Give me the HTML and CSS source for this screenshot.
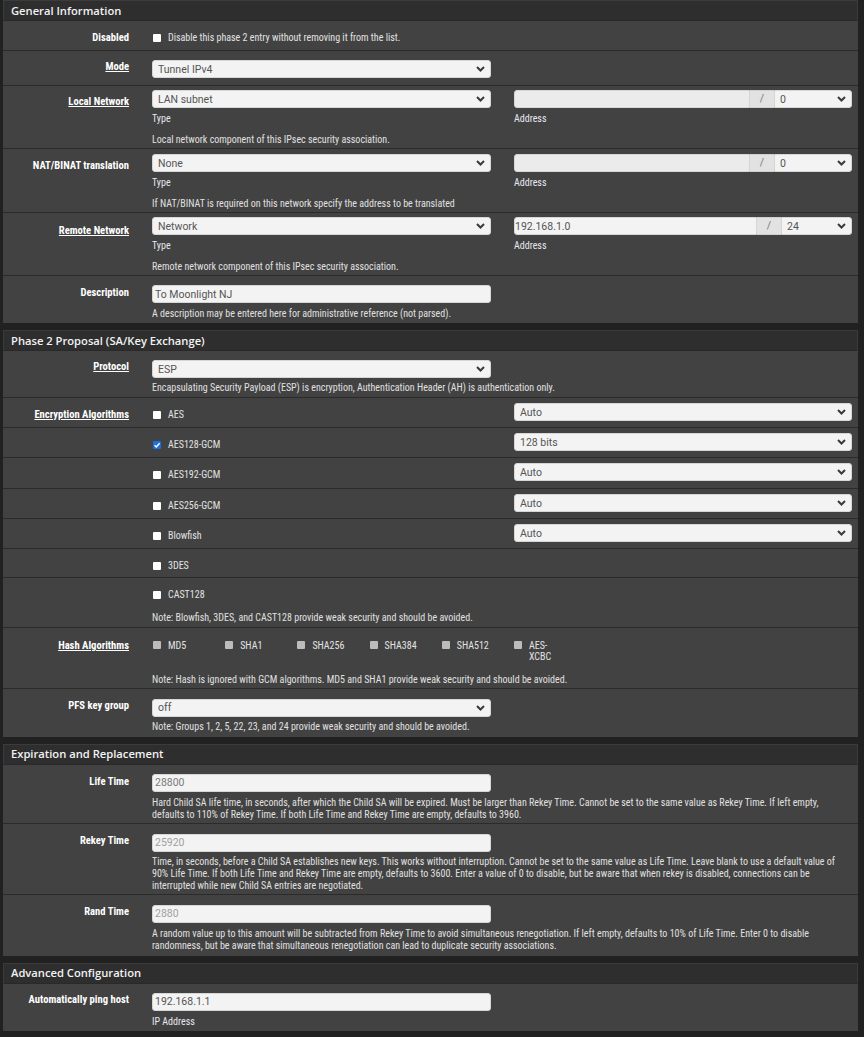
FILE: index.html
```html
<!DOCTYPE html>
<html lang="en">
<head>
<meta charset="utf-8">
<title>IPsec Phase 2</title>
<link rel="stylesheet" href="styles.css">
</head>
<body>
<div class="page">

<section class="panel">
  <h2 class="ph">General Information</h2>

  <div class="row p5 q6">
    <div class="lbl o1">Disabled</div>
    <div class="c2"><div class="cbline"><span class="cb"></span><span>Disable this phase 2 entry without removing it from the list.</span></div></div>
  </div>

  <div class="row p9 q7">
    <div class="lbl"><u>Mode</u></div>
    <div class="c2">
      <span class="sw"><select><option>Tunnel IPv4</option></select><svg viewBox="0 0 9 6"><path d="M1 1l3.5 3.5L8 1"/></svg></span>
    </div>
  </div>

  <div class="row p4 q2">
    <div class="lbl"><u>Local Network</u></div>
    <div class="c2">
      <span class="sw"><select><option>LAN subnet</option></select><svg viewBox="0 0 9 6"><path d="M1 1l3.5 3.5L8 1"/></svg></span>
      <div class="sub">Type</div>
    </div>
    <div class="c3">
      <div class="ig"><input class="inp dis" type="text" value=""><span class="addon">/</span><span class="sw w78"><select><option>0</option></select><svg viewBox="0 0 9 6"><path d="M1 1l3.5 3.5L8 1"/></svg></span></div>
      <div class="sub">Address</div>
    </div>
    <div class="help span m9">Local network component of this IPsec security association.</div>
  </div>

  <div class="row p5 q2">
    <div class="lbl o1">NAT/BINAT translation</div>
    <div class="c2">
      <span class="sw"><select><option>None</option></select><svg viewBox="0 0 9 6"><path d="M1 1l3.5 3.5L8 1"/></svg></span>
      <div class="sub">Type</div>
    </div>
    <div class="c3">
      <div class="ig"><input class="inp dis" type="text" value=""><span class="addon">/</span><span class="sw w78"><select><option>0</option></select><svg viewBox="0 0 9 6"><path d="M1 1l3.5 3.5L8 1"/></svg></span></div>
      <div class="sub">Address</div>
    </div>
    <div class="help span m9">If NAT/BINAT is required on this network specify the address to be translated</div>
  </div>

  <div class="row p4 q2">
    <div class="lbl o2"><u>Remote Network</u></div>
    <div class="c2">
      <span class="sw"><select><option>Network</option></select><svg viewBox="0 0 9 6"><path d="M1 1l3.5 3.5L8 1"/></svg></span>
      <div class="sub">Type</div>
    </div>
    <div class="c3">
      <div class="ig"><input class="inp tight" type="text" value="192.168.1.0"><span class="addon">/</span><span class="sw w71"><select><option>24</option></select><svg viewBox="0 0 9 6"><path d="M1 1l3.5 3.5L8 1"/></svg></span></div>
      <div class="sub">Address</div>
    </div>
    <div class="help span m9">Remote network component of this IPsec security association.</div>
  </div>

  <div class="row p9 q3 last">
    <div class="lbl o1">Description</div>
    <div class="c2"><input class="inp" type="text" value="To Moonlight NJ"></div>
    <div class="help span m5">A description may be entered here for administrative reference (not parsed).</div>
  </div>
</section>

<section class="panel">
  <h2 class="ph">Phase 2 Proposal (SA/Key Exchange)</h2>

  <div class="row p9 q3">
    <div class="lbl"><u>Protocol</u></div>
    <div class="c2"><span class="sw"><select><option>ESP</option></select><svg viewBox="0 0 9 6"><path d="M1 1l3.5 3.5L8 1"/></svg></span></div>
    <div class="help span m4">Encapsulating Security Payload (ESP) is encryption, Authentication Header (AH) is authentication only.</div>
  </div>

  <div class="row p5 q6">
    <div class="lbl o1"><u>Encryption Algorithms</u></div>
    <div class="c2"><div class="cbline"><span class="cb"></span><span>AES</span></div></div>
    <div class="c3"><span class="sw"><select><option>Auto</option></select><svg viewBox="0 0 9 6"><path d="M1 1l3.5 3.5L8 1"/></svg></span></div>
  </div>

  <div class="row p5 q6">
    <div class="lbl"></div>
    <div class="c2"><div class="cbline"><span class="cb on"><svg viewBox="0 0 8 8"><path d="M1.6 4.2l1.7 1.7L6.6 2.2"/></svg></span><span>AES128-GCM</span></div></div>
    <div class="c3"><span class="sw"><select><option>128 bits</option></select><svg viewBox="0 0 9 6"><path d="M1 1l3.5 3.5L8 1"/></svg></span></div>
  </div>

  <div class="row p5 q7">
    <div class="lbl"></div>
    <div class="c2"><div class="cbline"><span class="cb"></span><span>AES192-GCM</span></div></div>
    <div class="c3"><span class="sw"><select><option>Auto</option></select><svg viewBox="0 0 9 6"><path d="M1 1l3.5 3.5L8 1"/></svg></span></div>
  </div>

  <div class="row p5 q6">
    <div class="lbl"></div>
    <div class="c2"><div class="cbline"><span class="cb"></span><span>AES256-GCM</span></div></div>
    <div class="c3"><span class="sw"><select><option>Auto</option></select><svg viewBox="0 0 9 6"><path d="M1 1l3.5 3.5L8 1"/></svg></span></div>
  </div>

  <div class="row p5 q6">
    <div class="lbl"></div>
    <div class="c2"><div class="cbline"><span class="cb"></span><span>Blowfish</span></div></div>
    <div class="c3"><span class="sw"><select><option>Auto</option></select><svg viewBox="0 0 9 6"><path d="M1 1l3.5 3.5L8 1"/></svg></span></div>
  </div>

  <div class="row p5 q5">
    <div class="lbl"></div>
    <div class="c2"><div class="cbline"><span class="cb"></span><span>3DES</span></div></div>
  </div>

  <div class="row p5 q3">
    <div class="lbl"></div>
    <div class="c2"><div class="cbline"><span class="cb"></span><span>CAST128</span></div></div>
    <div class="help span m11">Note: Blowfish, 3DES, and CAST128 provide weak security and should be avoided.</div>
  </div>

  <div class="row p5 q2">
    <div class="lbl o2"><u>Hash Algorithms</u></div>
    <div class="hashes span">
      <div class="hi"><span class="cb off"></span><span class="ht">MD5</span></div>
      <div class="hi"><span class="cb off"></span><span class="ht">SHA1</span></div>
      <div class="hi"><span class="cb off"></span><span class="ht">SHA256</span></div>
      <div class="hi"><span class="cb off"></span><span class="ht">SHA384</span></div>
      <div class="hi"><span class="cb off"></span><span class="ht">SHA512</span></div>
      <div class="hi"><span class="cb off"></span><span class="ht">AES-XCBC</span></div>
    </div>
    <div class="help span m12">Note: Hash is ignored with GCM algorithms. MD5 and SHA1 provide weak security and should be avoided.</div>
  </div>

  <div class="row p10 q4 last">
    <div class="lbl o1">PFS key group</div>
    <div class="c2"><span class="sw"><select><option>off</option></select><svg viewBox="0 0 9 6"><path d="M1 1l3.5 3.5L8 1"/></svg></span></div>
    <div class="help span m4">Note: Groups 1, 2, 5, 22, 23, and 24 provide weak security and should be avoided.</div>
  </div>
</section>

<section class="panel">
  <h2 class="ph up">Expiration and Replacement</h2>

  <div class="row p9 q2">
    <div class="lbl o1">Life Time</div>
    <div class="c2"><input class="inp mid" type="text" value="28800"></div>
    <div class="help span m5">Hard Child SA life time, in seconds, after which the Child SA will be expired. Must be larger than Rekey Time. Cannot be set to the same value as Rekey Time. If left empty, defaults to 110% of Rekey Time. If both Life Time and Rekey Time are empty, defaults to 3960.</div>
  </div>

  <div class="row p10 q2">
    <div class="lbl o1">Rekey Time</div>
    <div class="c2"><input class="inp" type="text" placeholder="25920"></div>
    <div class="help span m4">Time, in seconds, before a Child SA establishes new keys. This works without interruption. Cannot be set to the same value as Life Time. Leave blank to use a default value of 90% Life Time. If both Life Time and Rekey Time are empty, defaults to 3600. Enter a value of 0 to disable, but be aware that when rekey is disabled, connections can be interrupted while new Child SA entries are negotiated.</div>
  </div>

  <div class="row p10 q4 last">
    <div class="lbl o1">Rand Time</div>
    <div class="c2"><input class="inp" type="text" placeholder="2880"></div>
    <div class="help span m5">A random value up to this amount will be subtracted from Rekey Time to avoid simultaneous renegotiation. If left empty, defaults to 10% of Life Time. Enter 0 to disable randomness, but be aware that simultaneous renegotiation can lead to duplicate security associations.</div>
  </div>
</section>

<section class="panel">
  <h2 class="ph up">Advanced Configuration</h2>

  <div class="row p9 q3 last">
    <div class="lbl">Automatically ping host</div>
    <div class="c2">
      <input class="inp" type="text" value="192.168.1.1">
      <div class="sub">IP Address</div>
    </div>
  </div>
</section>

</div>
</body>
</html>
```
FILE: styles.css
```css
* { box-sizing: border-box; }

html, body {
  margin: 0;
  padding: 0;
}

body {
  width: 864px;
  height: 1037px;
  overflow: hidden;
  background: #212121;
  font-family: Roboto, "Liberation Sans", sans-serif;
  font-stretch: 75%;
  font-size: 10px;
  line-height: 12px;
  color: #e2e2e2;
}

.page {
  width: 858px;
  padding-left: 3px;
}

.panel {
  background: #424242;
  margin-bottom: 7px;
}

.ph {
  margin: 0;
  height: 21px;
  padding-left: 7px;
  background: #2e2e2e;
  border: 1px solid #3b3b3b;
  border-bottom-color: #292929;
  font-family: "Open Sans", "Liberation Sans", sans-serif;
  font-stretch: 100%;
  font-weight: 600;
  font-size: 11.2px;
  line-height: 19px;
  color: #f2f2f2;
}
.ph.up { line-height: 18px; }

/* rows */
.row {
  display: grid;
  grid-template-columns: 126px 339px 338px;
  column-gap: 23px;
  align-items: start;
  padding-top: var(--pt);
  padding-bottom: var(--pb);
  border-bottom: 1px solid #2b2b2b;
}
.row.last { border-bottom: 0; }

.p4 { --pt: 4px; }
.p5 { --pt: 5px; }
.p9 { --pt: 9px; }
.p10 { --pt: 10px; }
.q2 { --pb: 2px; }
.q3 { --pb: 3px; }
.q4 { --pb: 4px; }
.q5 { --pb: 5px; }
.q6 { --pb: 6px; }
.q7 { --pb: 7px; }

.lbl {
  grid-column: 1;
  grid-row: 1;
  margin-top: calc(10px - var(--pt) + var(--lo, 0px));
  text-align: right;
  font-weight: 700;
  font-size: 10.6px;
  line-height: 12px;
  color: #ffffff;
  white-space: nowrap;
}
.lbl.o1 { --lo: 1px; }
.lbl.o2 { --lo: 2px; }
.lbl u {
  text-decoration: underline;
  text-underline-offset: 1px;
}

.c2 { grid-column: 2; grid-row: 1; }
.c3 { grid-column: 3; grid-row: 1; }
.span { grid-column: 2 / 4; grid-row: 2; }

.help { color: #e0e0e0; }
.sub { margin-top: 5px; color: #e6e8f0; }

.m4 { margin-top: 4px; }
.m5 { margin-top: 5px; }
.m9 { margin-top: 9px; }
.m11 { margin-top: 11px; }
.m12 { margin-top: 12px; }

/* form controls */
.sw {
  position: relative;
  display: block;
  height: 18px;
}
.sw select {
  display: block;
  width: 100%;
  height: 18px;
  margin: 0;
  padding: 0 18px 0 5px;
  -webkit-appearance: none;
  appearance: none;
  background: #f3f3f3;
  border: 1px solid #d6d6d6;
  border-radius: 3px;
  font-family: Roboto, "Liberation Sans", sans-serif;
  font-stretch: 100%;
  font-size: 10.5px;
  color: #555555;
  outline: none;
}
.sw svg {
  position: absolute;
  right: 6px;
  top: 6px;
  width: 9px;
  height: 6px;
  fill: none;
  stroke: #3a3a3a;
  stroke-width: 2;
  pointer-events: none;
}

.inp {
  display: block;
  width: 100%;
  height: 18px;
  margin: 0;
  padding: 0 2px;
  background: #f3f3f3;
  border: 1px solid #d6d6d6;
  border-radius: 3px;
  font-family: Roboto, "Liberation Sans", sans-serif;
  font-stretch: 100%;
  font-size: 10.5px;
  color: #555555;
  outline: none;
}
.inp::placeholder { color: #a0a0a0; }
.inp.mid { color: #7a7a7a; }
.inp.dis { background: #ebebeb; }
.inp.tight { padding-left: 0; }

.ig {
  display: flex;
  height: 18px;
}
.ig .inp {
  flex: 1;
  width: auto;
  min-width: 0;
  border-radius: 3px 0 0 3px;
}
.addon {
  width: 24px;
  height: 18px;
  flex: none;
  background: #e2e2e2;
  border-top: 1px solid #d0d0d0;
  border-bottom: 1px solid #d0d0d0;
  text-align: center;
  line-height: 16px;
  font-family: Roboto, "Liberation Sans", sans-serif;
  font-stretch: 100%;
  font-size: 10.5px;
  color: #777777;
}
.ig .sw { flex: none; }
.ig .sw select { border-radius: 0 3px 3px 0; }
.w78 { width: 78px; }
.w71 { width: 71px; }

/* checkboxes */
.cbline {
  display: flex;
  align-items: center;
  padding-top: 6px;
  height: 18px;
  line-height: 12px;
}
.cb {
  flex: none;
  display: inline-flex;
  width: 8px;
  height: 8px;
  margin: 0 7px 0 1px;
  background: #ffffff;
  border-radius: 1px;
}
.cb.on { background: #1b6fe0; }
.cb.on svg {
  width: 8px;
  height: 8px;
  fill: none;
  stroke: #ffffff;
  stroke-width: 1.4;
}
.cb.off { background: #bcbcbc; }

.hashes {
  grid-row: 1;
  display: flex;
  padding-top: 6px;
}
.hi {
  display: flex;
  align-items: flex-start;
  width: 72.2px;
  flex: none;
}
.hi .cb { margin-top: 2px; }
.ht {
  max-width: 40px;
  line-height: 11px;
  padding-top: 0.5px;
}
```
